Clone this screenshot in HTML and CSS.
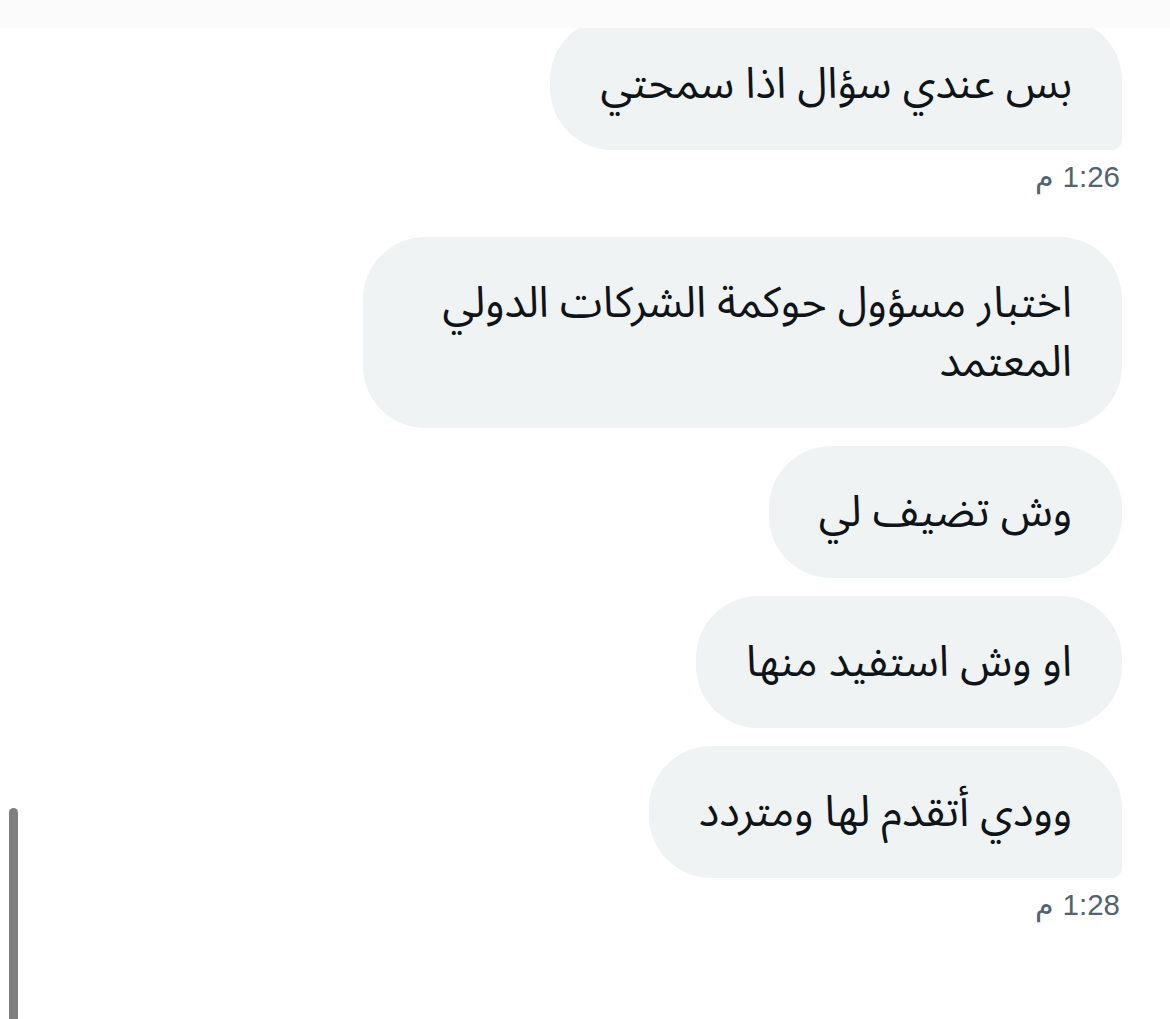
FILE: index.html
```html
<!DOCTYPE html>
<html lang="ar">
<head>
<meta charset="utf-8">
<title>Chat</title>
<link rel="stylesheet" href="styles.css">
</head>
<body>
<div class="top-fade"></div>
<main class="thread">
  <div class="group">
    <div class="bubble last" dir="rtl">بس عندي سؤال اذا سمحتي</div>
    <div class="time" dir="rtl">1:26 م</div>
  </div>
  <div class="group">
    <div class="bubble wide" dir="rtl">اختبار مسؤول حوكمة الشركات الدولي المعتمد</div>
    <div class="bubble" dir="rtl">وش تضيف لي</div>
    <div class="bubble" dir="rtl">او وش استفيد منها</div>
    <div class="bubble last" dir="rtl">وودي أتقدم لها ومتردد</div>
    <div class="time" dir="rtl">1:28 م</div>
  </div>
</main>
<div class="scroll-indicator"></div>
</body>
</html>
```
FILE: styles.css
```css
html, body {
  margin: 0;
  padding: 0;
  background: #ffffff;
}

body {
  height: 1019px;
  overflow: hidden;
}

.top-fade {
  position: fixed;
  top: 0;
  left: 0;
  right: 0;
  height: 28px;
  background: #fbfbfb;
  z-index: 2;
}

.thread {
  display: flex;
  flex-direction: column;
  align-items: flex-end;
  padding: 18px 48px 0 0;
}

.group {
  display: flex;
  flex-direction: column;
  align-items: flex-end;
  gap: 18px;
  margin-bottom: 43px;
}

.bubble {
  background: #eff3f4;
  color: #0f1419;
  font-family: "Noto Sans Arabic", "DejaVu Sans", sans-serif;
  font-size: 43px;
  line-height: 59px;
  padding: 36.5px 50px;
  border-radius: 62px;
  max-width: 659px;
  text-align: right;
}

.bubble.last {
  border-bottom-right-radius: 10px;
}

.time {
  margin-top: -8px;
  margin-right: 2px;
  font-family: "Liberation Sans", Arial, sans-serif;
  font-size: 29.5px;
  line-height: 34px;
  color: #536471;
}

.scroll-indicator {
  position: fixed;
  left: 9px;
  top: 808px;
  bottom: -10px;
  width: 9px;
  border-radius: 5px;
  background: #808080;
}
```
